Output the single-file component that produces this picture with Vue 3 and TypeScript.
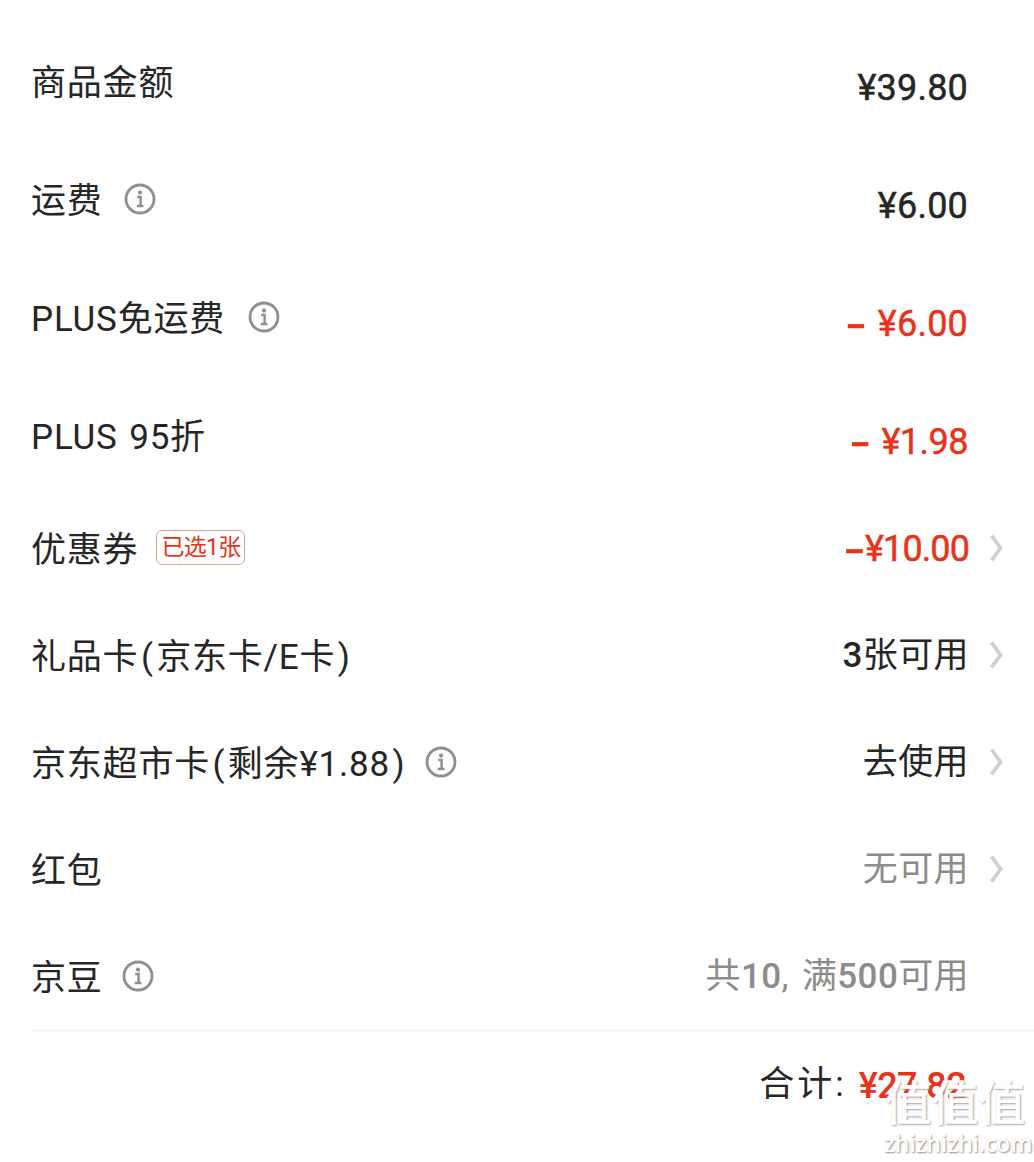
<template>
  <div class="page">
    <div class="list">
      <div
        v-for="row in rows"
        :key="row.label"
        class="row"
        :class="{ 'row--tall': row.tall }"
      >
        <div class="row__left">
          <span class="row__label">
            <template v-for="(part, i) in splitParens(row.label)" :key="i">
              <span v-if="part === '(' || part === ')'" class="paren">{{ part }}</span>
              <template v-else>{{ part }}</template>
            </template>
          </span>
          <span v-if="row.tag" class="row__tag">{{ row.tag }}</span>
          <svg v-if="row.info" class="info" viewBox="0 0 32 32" :style="{ marginLeft: row.infoGap + 'px' }">
            <circle cx="16" cy="16" r="14" fill="none" stroke="#8f8f8f" stroke-width="2.8" />
            <circle cx="16" cy="9.6" r="2.1" fill="#8f8f8f" />
            <path d="M13.2 14h3.4v8.6M12.8 23h6.6" fill="none" stroke="#8f8f8f" stroke-width="2.4" />
          </svg>
        </div>
        <div class="row__right">
          <span
            class="row__value"
            :class="[row.kind ? `row__value--${row.kind}` : '', { 'row__value--tight': row.tight }]"
          >
            <span v-if="row.sign" class="sign">{{ row.sign }}</span>
            <template v-for="(part, i) in splitDigits(row.value)" :key="i">
              <span v-if="row.boldDigits && /^\d+$/.test(part)" class="digits">{{ part }}</span>
              <template v-else>{{ part }}</template>
            </template>
          </span>
          <svg v-if="row.arrow" class="arrow" viewBox="0 0 14 30">
            <path d="M2.5 2.5l9 12.5-9 12.5" fill="none" stroke="#cfcfcf" stroke-width="3.8" />
          </svg>
        </div>
      </div>
    </div>

    <div class="total">
      <span class="total__label">合计:</span>
      <span class="total__value">¥27.82</span>
    </div>

    <div class="watermark">
      <div class="watermark__glyphs">值值值</div>
      <div class="watermark__url">zhizhizhi.com</div>
    </div>
  </div>
</template>

<script setup lang="ts">
interface Row {
  label: string
  value: string
  kind?: 'price' | 'discount' | 'coupon' | 'muted'
  sign?: string
  tight?: boolean
  boldDigits?: boolean
  tall?: boolean
  info?: boolean
  infoGap?: number
  tag?: string
  arrow?: boolean
}

const rows: Row[] = [
  { label: '商品金额', value: '¥39.80', kind: 'price', tall: true },
  { label: '运费', value: '¥6.00', kind: 'price', tall: true, info: true, infoGap: 21 },
  { label: 'PLUS免运费', value: '¥6.00', kind: 'discount', sign: '-', tall: true, info: true, infoGap: 23 },
  { label: 'PLUS 95折', value: '¥1.98', kind: 'discount', sign: '-', tight: true, tall: true },
  { label: '优惠券', value: '¥10.00', kind: 'coupon', sign: '-', tag: '已选1张', arrow: true },
  { label: '礼品卡(京东卡/E卡)', value: '3张可用', boldDigits: true, arrow: true },
  { label: '京东超市卡(剩余¥1.88)', value: '去使用', info: true, infoGap: 17, arrow: true },
  { label: '红包', value: '无可用', kind: 'muted', arrow: true },
  { label: '京豆', value: '共10, 满500可用', kind: 'muted', boldDigits: true, info: true, infoGap: 19 }
]

const splitParens = (text: string) => text.split(/([()])/).filter(Boolean)
const splitDigits = (text: string) => text.split(/(\d+)/).filter(Boolean)
</script>

<style>
html,
body {
  margin: 0;
  background: #fff;
}
</style>

<style scoped>
.page {
  position: relative;
  width: 1034px;
  height: 1162px;
  overflow: hidden;
  box-sizing: border-box;
  padding-top: 22px;
  background: #fff;
  font-family: Roboto, "Noto Sans CJK SC", sans-serif;
  color: #262626;
}

.list {
  display: flex;
  flex-direction: column;
  margin-bottom: 1px;
}

.row {
  display: flex;
  align-items: center;
  justify-content: space-between;
  height: 107px;
  padding: 0 31px 0 31px;
}

.row--tall {
  height: 118px;
}

.row__left,
.row__right {
  display: flex;
  align-items: center;
}

.row__label {
  padding-top: 6px;
  font-size: 35px;
  line-height: 44px;
  letter-spacing: 0.8px;
  word-spacing: 2px;
}

.paren {
  margin: 0 2.5px;
}

.row__tag {
  margin-left: 18px;
  padding: 0 3px 0 4px;
  height: 35px;
  line-height: 33px;
  box-sizing: border-box;
  border: 1px solid #e9a396;
  border-radius: 6px;
  font-size: 23px;
  letter-spacing: -0.7px;
  color: #e8321a;
  white-space: nowrap;
}

.info {
  width: 32px;
  height: 32px;
}

.row__value {
  margin-right: 34px;
  padding-top: 2px;
  font-size: 35px;
  line-height: 44px;
  letter-spacing: 0.4px;
  white-space: pre;
}

.digits {
  font-weight: 500;
}

.row__value--price,
.row__value--discount,
.row__value--coupon {
  font-size: 36px;
  font-weight: 400;
  letter-spacing: 0.2px;
  -webkit-text-stroke: 0.5px currentColor;
}

.row__value--price,
.row__value--discount {
  margin-top: 12px;
  margin-right: 35px;
}

.row__value--tight {
  letter-spacing: -0.5px;
}

.row__value--discount,
.row__value--coupon {
  color: #e8321a;
}

.row__value--coupon {
  letter-spacing: -0.9px;
}

.row__value--muted {
  color: #8c8c8c;
  word-spacing: 4px;
}

.sign {
  display: inline-block;
  margin-right: 17px;
  transform: scale(1.8, 1.4);
}

.row__value--coupon .sign {
  margin-right: 7px;
}

.arrow {
  width: 14px;
  height: 30px;
  margin-left: -14px;
}

.total {
  display: flex;
  justify-content: flex-end;
  align-items: center;
  gap: 12px;
  margin-left: 32px;
  padding: 31px 68px 0 0;
  border-top: 1px solid #ececec;
}

.total__label {
  font-size: 35px;
  line-height: 44px;
  letter-spacing: 3px;
}

.total__value {
  margin-top: 2px;
  font-size: 36px;
  line-height: 44px;
  font-weight: 500;
  letter-spacing: -0.6px;
  color: #e8321a;
}

.watermark {
  position: absolute;
  right: 8px;
  bottom: 5px;
  width: 142px;
  text-align: center;
  color: #fff;
}

.watermark__glyphs {
  font-size: 47px;
  line-height: 50px;
  font-weight: 500;
  text-shadow: 1px 1px 2px #a0a0a0;
}

.watermark__url {
  font-family: "Noto Sans", sans-serif;
  font-size: 23px;
  line-height: 28px;
  font-weight: 500;
  text-shadow: 1px 1px 2px #8a8a8a;
}
</style>
